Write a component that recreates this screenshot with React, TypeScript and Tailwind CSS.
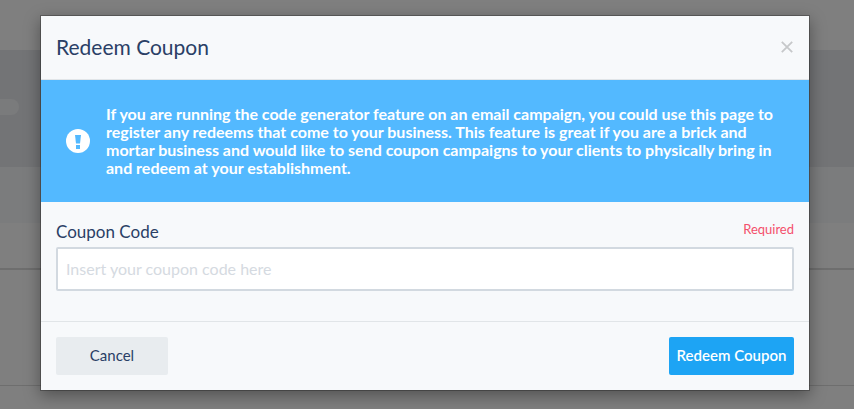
import React from "react";

function PageBehind() {
  return (
    <div aria-hidden="true" className="flex h-screen flex-col overflow-hidden bg-white">
      <div className="h-[50px] shrink-0" />
      <div className="h-[117px] shrink-0 bg-[#e7e9ed] pt-[49px]">
        <div className="h-4 w-[19px] rounded-r-full bg-[#f5f6f8]" />
      </div>
      <div className="h-14 shrink-0 bg-[#f6f8fb]" />
      <div className="h-[47px] shrink-0 border-b-2 border-[#dcdcdc]" />
      <div className="h-[116px] shrink-0 border-b border-[#dcdcdc]" />
    </div>
  );
}

function AlertIcon() {
  return (
    <svg aria-hidden="true" viewBox="0 0 24 24" className="size-6 shrink-0">
      <circle cx="12" cy="12" r="12" fill="#fff" />
      <path d="M9 6h6l-1 8.500h-4z" fill="#53b9ff" />
      <rect x="10" y="16" width="4" height="4" fill="#53b9ff" />
    </svg>
  );
}

export default function App() {
  return (
    <div className="relative font-['Lato','Liberation_Sans',sans-serif] text-[#2a4066]">
      <PageBehind />
      <div className="absolute inset-0 flex items-start justify-center bg-black/50 pt-[15px] pr-11 pl-10">
        <form
          role="dialog"
          aria-modal="true"
          aria-labelledby="dialog-title"
          onSubmit={(event) => event.preventDefault()}
          className="w-full max-w-[770px] border border-black/25 bg-[#f7f9fb] bg-clip-padding shadow-[0_5px_15px_rgba(0,0,0,0.35)]"
        >
          <header className="flex h-16 items-center justify-between border-b border-[#e1e5e8] px-[15px] pb-0.5">
            <h1 id="dialog-title" className="text-[21px] leading-6">
              Redeem Coupon
            </h1>
            <button type="button" aria-label="Close" className="flex size-3.5 items-center justify-center text-[#c6c8ca]">
              <svg viewBox="0 0 12 12" className="size-3" fill="none" stroke="currentColor" strokeWidth="1.8">
                <path d="M.8.8l10.400 10.400M11.200.8L.8 11.200" />
              </svg>
            </button>
          </header>

          <div className="flex items-center gap-4 bg-[#53b9ff] py-[25px] pr-5 pl-[25px] text-white">
            <AlertIcon />
            <p className="text-base leading-[18px] font-bold">
              If you are running the code generator feature on an email campaign, you could use this page to register any
              redeems that come to your business. This feature is great if you are a brick and mortar business and would
              like to send coupon campaigns to your clients to physically bring in and redeem at your establishment.
            </p>
          </div>

          <div className="px-[15px] pt-[18px] pb-[30px]">
            <div className="flex items-start justify-between pb-[3px]">
              <label htmlFor="coupon-code" className="text-[17px] leading-6">
                Coupon Code
              </label>
              <span className="text-[13px] leading-[18px] text-[#f4506b]">Required</span>
            </div>
            <input
              id="coupon-code"
              type="text"
              required
              placeholder="Insert your coupon code here"
              className="block h-11 w-full rounded-xs border-2 border-[#d2d9e0] bg-white px-2 pb-0.5 text-base outline-none placeholder:text-[#d5dae1]"
            />
          </div>

          <footer className="flex justify-between border-t border-[#e1e5e8] p-[15px]">
            <button type="button" className="h-[38px] w-28 rounded-xs bg-[#e8ecef] pb-0.5 text-[15px]">
              Cancel
            </button>
            <button
              type="submit"
              className="h-[38px] w-[125px] rounded-xs bg-[#1da4f4] pb-0.5 text-[15px] font-semibold text-white"
            >
              Redeem Coupon
            </button>
          </footer>
        </form>
      </div>
    </div>
  );
}
